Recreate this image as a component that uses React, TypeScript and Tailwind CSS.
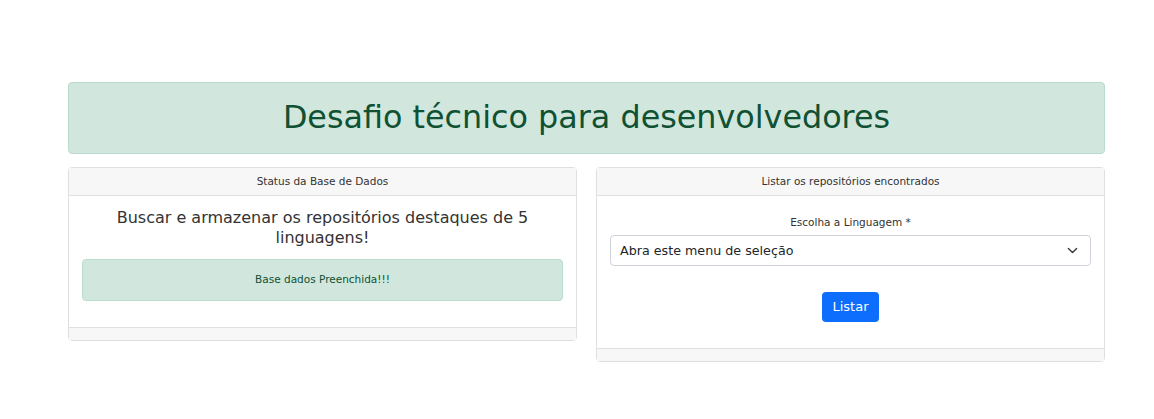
import React from "react";

export default function App() {
  return (
    <div className="min-h-[419px] w-full bg-white text-[#212529]" style={{ fontFamily: '"DejaVu Sans", sans-serif' }}>
      <div className="ml-[68px] w-[1037px] pt-[82px]">
        <div className="flex h-[72px] items-center justify-center rounded-[4px] border border-[#badbcc] bg-[#d1e7dd] text-[#0f5132]">
          <h1 className="-mt-[3px] text-[31.8px] leading-[38px]">Desafio técnico para desenvolvedores</h1>
        </div>
        <div className="mt-[13px] flex items-start gap-[19px]">
          <div className="flex w-[509px] flex-col rounded-[4px] border border-[#dfdfdf]">
            <div className="flex h-[28px] items-center justify-center border-b border-[#dfdfdf] bg-[#f7f7f7] text-[10.5px] text-[#333]">
              Status da Base de Dados
            </div>
            <div className="px-[13px] pb-[26px] pt-[12px]">
              <p className="text-center text-[16px] leading-[20px] text-[#333]">
                Buscar e armazenar os repositórios destaques de 5 linguagens!
              </p>
              <div className="mt-[11px] flex h-[42px] items-center justify-center rounded-[4px] border border-[#badbcc] bg-[#d1e7dd] text-[10.5px] text-[#0f5132]">
                Base dados Preenchida!!!
              </div>
            </div>
            <div className="h-[13px] border-t border-[#dfdfdf] bg-[#f7f7f7]" />
          </div>
          <div className="flex w-[509px] flex-col rounded-[4px] border border-[#dfdfdf]">
            <div className="flex h-[28px] items-center justify-center border-b border-[#dfdfdf] bg-[#f7f7f7] text-[10.5px] text-[#333]">
              Listar os repositórios encontrados
            </div>
            <div className="px-[13px] pb-[26px] pt-[17px]">
              <div className="text-center text-[10.5px] leading-[18px] text-[#333]">Escolha a Linguagem *</div>
              <div className="mt-[4px] flex h-[31px] items-center justify-between rounded-[4px] border border-[#ced4da] bg-white pl-[9px] pr-[12px] text-[12.7px]">
                <span>Abra este menu de seleção</span>
                <svg width="11" height="11" viewBox="0 0 16 16" fill="none" stroke="#343a40" strokeWidth="2" strokeLinecap="round" strokeLinejoin="round">
                  <path d="M2 5l6 6 6-6" />
                </svg>
              </div>
              <div className="mt-[26px] flex justify-center">
                <button className="h-[30px] w-[57px] rounded-[4px] bg-[#0d6efd] text-[13px] text-white">Listar</button>
              </div>
            </div>
            <div className="h-[13px] border-t border-[#dfdfdf] bg-[#f7f7f7]" />
          </div>
        </div>
      </div>
    </div>
  );
}
